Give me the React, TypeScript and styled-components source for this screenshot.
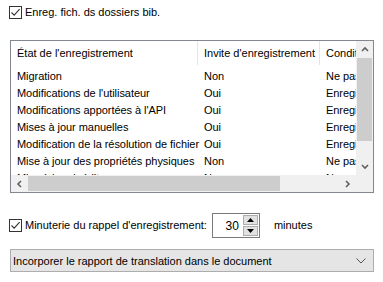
import styled, { createGlobalStyle } from 'styled-components';

const GlobalStyle = createGlobalStyle`
  body {
    margin: 0;
    background: #ffffff;
    font-family: 'Liberation Sans', Arial, sans-serif;
    font-size: 11px;
    color: #000000;
  }
`;

const rows = [
  ['Migration', 'Non', 'Ne pas enregistrer'],
  ["Modifications de l'utilisateur", 'Oui', 'Enregistrer'],
  ["Modifications apportées à l'API", 'Oui', 'Enregistrer'],
  ['Mises à jour manuelles', 'Oui', 'Enregistrer'],
  ['Modification de la résolution de fichier', 'Oui', 'Enregistrer'],
  ['Mise à jour des propriétés physiques', 'Non', 'Ne pas enregistrer'],
  ['Mise à jour inédite', 'Non', 'Ne pas enregistrer'],
];

const Check = () => (
  <CheckBox>
    <svg width="11" height="11" viewBox="0 0 11 11">
      <path d="M1.5 5.5 L4.2 8.2 L9.6 2.2" fill="none" stroke="#333" strokeWidth="1.1" />
    </svg>
  </CheckBox>
);

const Arrow = ({ dir }: { dir: 'up' | 'down' | 'left' | 'right' }) => {
  const d = {
    up: 'M1 5 L4 2 L7 5',
    down: 'M1 2 L4 5 L7 2',
    left: 'M5 1 L2 4 L5 7',
    right: 'M2 1 L5 4 L2 7',
  }[dir];
  return (
    <svg width="8" height="8" viewBox="0 0 8 8">
      <path d={d} fill="none" stroke="#606060" strokeWidth="1.6" />
    </svg>
  );
};

export default function App() {
  return (
    <>
      <GlobalStyle />
      <Page>
        <CheckRow>
          <Check />
          <Label>Enreg. fich. ds dossiers bib.</Label>
        </CheckRow>

        <ListBox>
          <ListArea>
            <HeaderRow>
              <HeadCell $width={187}>État de l'enregistrement</HeadCell>
              <HeadCell $width={122}>Invite d'enregistrement</HeadCell>
              <HeadCell $width={120}>Condition</HeadCell>
            </HeaderRow>
            <Rows>
              {rows.map((r) => (
                <Row key={r[0]}>
                  <Cell $width={187}>{r[0]}</Cell>
                  <Cell $width={122}>{r[1]}</Cell>
                  <Cell $width={120}>{r[2]}</Cell>
                </Row>
              ))}
            </Rows>
          </ListArea>
          <VScroll>
            <ScrollButton>
              <Arrow dir="up" />
            </ScrollButton>
            <VTrack>
              <VThumb />
            </VTrack>
            <ScrollButton>
              <Arrow dir="down" />
            </ScrollButton>
          </VScroll>
          <HScroll>
            <ScrollButton>
              <Arrow dir="left" />
            </ScrollButton>
            <HTrack>
              <HThumb />
            </HTrack>
            <ScrollButton>
              <Arrow dir="right" />
            </ScrollButton>
          </HScroll>
          <Corner />
        </ListBox>

        <TimerRow>
          <CheckRow>
            <Check />
            <Label>Minuterie du rappel d'enregistrement:</Label>
          </CheckRow>
          <Spinner>
            <SpinValue>30</SpinValue>
            <SpinButtons>
              <SpinButton>
                <svg width="7" height="4" viewBox="0 0 7 4">
                  <path d="M0 4 L3.5 0 L7 4 Z" fill="#000" />
                </svg>
              </SpinButton>
              <SpinButton>
                <svg width="7" height="4" viewBox="0 0 7 4">
                  <path d="M0 0 L3.5 4 L7 0 Z" fill="#000" />
                </svg>
              </SpinButton>
            </SpinButtons>
          </Spinner>
          <Label>minutes</Label>
        </TimerRow>

        <Dropdown>
          <span>Incorporer le rapport de translation dans le document</span>
          <svg width="10" height="6" viewBox="0 0 10 6">
            <path d="M0.5 0.5 L5 5 L9.5 0.5" fill="none" stroke="#555" strokeWidth="1" />
          </svg>
        </Dropdown>
      </Page>
    </>
  );
}

const Page = styled.div`
  width: 383px;
  height: 282px;
  padding: 6px 9px 0 10px;
  box-sizing: border-box;
  display: flex;
  flex-direction: column;
`;

const CheckRow = styled.label`
  display: flex;
  align-items: center;
  gap: 3px;
  height: 13px;
`;

const CheckBox = styled.span`
  width: 13px;
  height: 13px;
  box-sizing: border-box;
  border: 1px solid #333333;
  background: #ffffff;
  display: flex;
  align-items: center;
  justify-content: center;
  margin-left: -1px;
`;

const Label = styled.span`
  white-space: nowrap;
  line-height: 13px;
`;

const ListBox = styled.div`
  margin-top: 21px;
  height: 153px;
  box-sizing: border-box;
  border: 1px solid #828790;
  display: grid;
  grid-template-columns: 1fr 17px;
  grid-template-rows: 1fr 17px;
  overflow: hidden;
`;

const ListArea = styled.div`
  overflow: hidden;
  background: #ffffff;
`;

const HeaderRow = styled.div`
  display: flex;
  height: 24px;
`;

const HeadCell = styled.div<{ $width: number }>`
  flex: 0 0 ${({ $width }) => $width}px;
  min-width: 0;
  box-sizing: border-box;
  padding-left: 6px;
  border-right: 1px solid #e5e5e5;
  display: flex;
  align-items: center;
  white-space: nowrap;
  overflow: hidden;
`;

const Rows = styled.div`
  padding-top: 2px;
`;

const Row = styled.div`
  display: flex;
  height: 17px;
  align-items: center;
`;

const Cell = styled.div<{ $width: number }>`
  flex: 0 0 ${({ $width }) => $width}px;
  min-width: 0;
  box-sizing: border-box;
  padding-left: 6px;
  white-space: nowrap;
  letter-spacing: -0.05px;
`;

const VScroll = styled.div`
  background: #f0f0f0;
  display: flex;
  flex-direction: column;
`;

const HScroll = styled.div`
  background: #f0f0f0;
  display: flex;
`;

const ScrollButton = styled.div`
  flex: 0 0 17px;
  width: 17px;
  height: 17px;
  display: flex;
  align-items: center;
  justify-content: center;
`;

const VTrack = styled.div`
  flex: 1;
  padding: 0 1px;
`;

const VThumb = styled.div`
  height: 83px;
  background: #cdcdcd;
`;

const HTrack = styled.div`
  flex: 1;
  padding: 1px 0;
`;

const HThumb = styled.div`
  width: 252px;
  height: 100%;
  background: #cdcdcd;
`;

const Corner = styled.div`
  background: #f0f0f0;
`;

const TimerRow = styled.div`
  margin-top: 20px;
  display: flex;
  align-items: center;
  height: 25px;

  & > ${Label} {
    margin-left: 14px;
  }
`;

const Spinner = styled.div`
  margin-left: 5px;
  width: 48px;
  height: 25px;
  box-sizing: border-box;
  border: 1px solid #7a7a7a;
  display: flex;
  align-items: center;
`;

const SpinValue = styled.span`
  flex: 1;
  text-align: right;
  padding-right: 4px;
  font-size: 12px;
`;

const SpinButtons = styled.div`
  display: flex;
  flex-direction: column;
  gap: 1px;
  height: 100%;
  padding: 1px 1px 1px 0;
  box-sizing: border-box;
`;

const SpinButton = styled.div`
  flex: 1;
  width: 15px;
  box-sizing: border-box;
  border: 1px solid #adadad;
  background: #e1e1e1;
  display: flex;
  align-items: center;
  justify-content: center;
`;

const Dropdown = styled.div`
  margin-top: 11px;
  height: 23px;
  box-sizing: border-box;
  border: 1px solid #adadad;
  background: #e5e5e5;
  display: flex;
  align-items: center;
  justify-content: space-between;
  padding: 0 7px 0 2px;
  white-space: nowrap;
`;
